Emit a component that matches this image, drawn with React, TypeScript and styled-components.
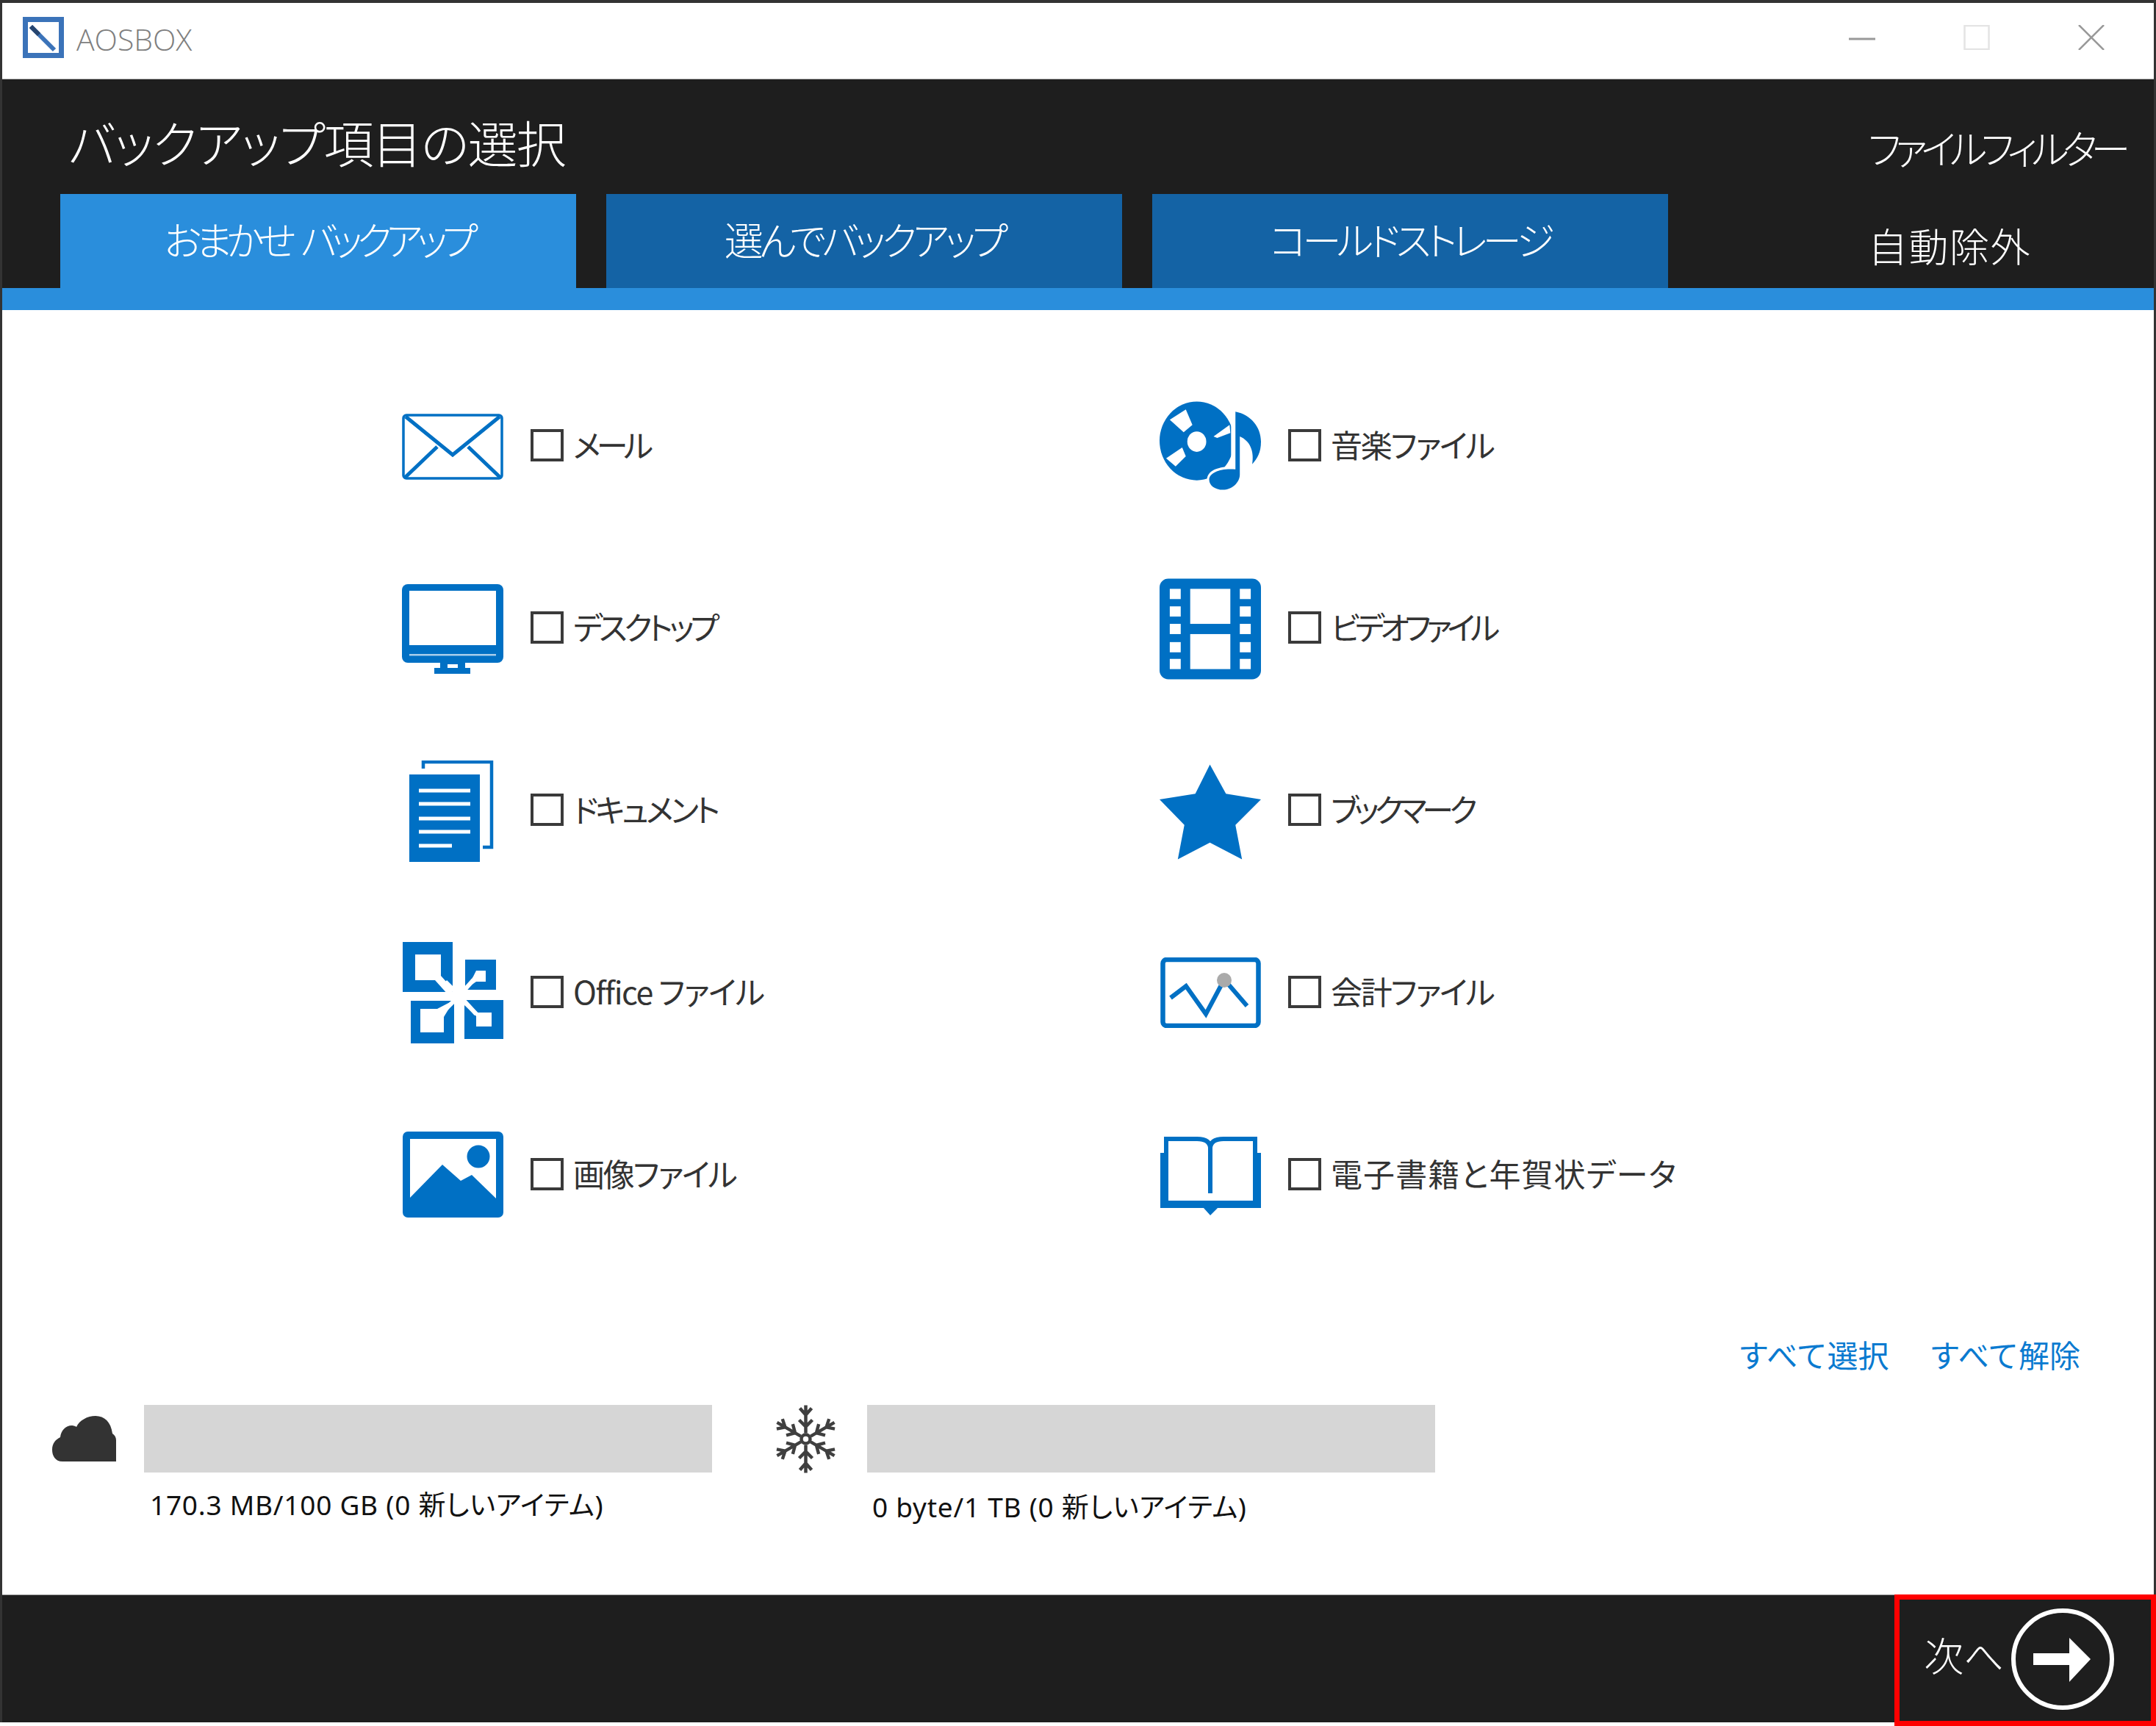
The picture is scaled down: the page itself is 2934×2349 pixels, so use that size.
import React from 'react';
import styled, { createGlobalStyle } from 'styled-components';

const JP = '"Noto Sans CJK JP", "Noto Sans", sans-serif';
const BLUE = '#0070c4';

const GlobalStyle = createGlobalStyle`
  html, body { margin: 0; padding: 0; background: #fff; }
  body { font-family: ${JP}; }
`;

const Screen = styled.div`
  position: relative;
  width: 2934px;
  height: 2349px;
  overflow: hidden;
  background: #fff;
`;

const Window = styled.div`
  display: flex;
  flex-direction: column;
  box-sizing: border-box;
  height: 2344px;
  border-top: 4px solid #333;
  border-left: 3px solid #333;
  border-right: 3px solid #333;
`;

const TitleBar = styled.div`
  display: flex;
  align-items: flex-start;
  box-sizing: border-box;
  height: 104px;
  padding: 19px 67px 0 28px;
  background: #fff;
  border-bottom: 1px solid #bbb;
`;

const AppName = styled.span`
  margin-left: 17px;
  font-family: "Open Sans", sans-serif;
  font-weight: 300;
  font-size: 41px;
  line-height: 60px;
  letter-spacing: 0;
  color: #7f7f7f;
`;

const WindowButtons = styled.div`
  display: flex;
  gap: 120px;
  margin-left: auto;
  padding-top: 11px;
`;

const Header = styled.header`
  display: flex;
  height: 284px;
  background: #1e1e1e;
`;

const HeaderMain = styled.div`
  display: flex;
  flex-direction: column;
`;

const Title = styled.h1`
  margin: 0;
  box-sizing: border-box;
  height: 156px;
  padding: 16px 0 0 90px;
  font-size: 68px;
  line-height: 138px;
  font-weight: 300;
  font-feature-settings: "palt";
  letter-spacing: -1.8px;
  color: #fff;
  white-space: nowrap;
`;

const Tabs = styled.div`
  display: flex;
  gap: 41px;
  padding-left: 79px;
`;

const Tab = styled.div<{ $active?: boolean; $tracking: number }>`
  box-sizing: border-box;
  width: 702px;
  height: 128px;
  padding-bottom: 6px;
  background: ${(p) => (p.$active ? '#2a8edc' : '#1463a5')};
  color: #fff;
  text-align: center;
  font-size: 53px;
  line-height: 122px;
  font-weight: 300;
  font-feature-settings: "palt";
  letter-spacing: ${(p) => p.$tracking}px;
  word-spacing: 10px;
  white-space: nowrap;
`;

const HeaderLinks = styled.div`
  display: flex;
  flex-direction: column;
  gap: 73px;
  margin-left: auto;
  width: 389px;
  box-sizing: border-box;
  padding-top: 63px;
`;

const HeaderLink = styled.span<{ $tracking: number }>`
  font-size: 54px;
  line-height: 60px;
  font-weight: 300;
  font-feature-settings: "palt";
  letter-spacing: ${(p) => p.$tracking}px;
  color: #fff;
  white-space: nowrap;
`;

const Strip = styled.div`
  height: 30px;
  background: #2a8edc;
`;

const Content = styled.main`
  flex: 1;
  display: flex;
  flex-direction: column;
  background: #fff;
`;

const ItemGrid = styled.div`
  display: grid;
  grid-template-columns: 1031px 1fr;
  grid-auto-rows: 248px;
  padding: 60px 0 0 544px;
`;

const Item = styled.label`
  display: flex;
  align-items: center;
`;

const IconCell = styled.div<{ $nudge: number }>`
  display: flex;
  justify-content: center;
  align-items: center;
  width: 138px;
  margin-right: 37px;
  padding-top: ${(p) => p.$nudge}px;
`;

const Check = styled.input.attrs({ type: 'checkbox' })`
  appearance: none;
  box-sizing: border-box;
  flex: none;
  width: 45px;
  height: 44px;
  margin: 0 13px 0 0;
  border: 4px solid #3a3a3a;
  background: #fff;
`;

const ItemLabel = styled.span<{ $tracking: number }>`
  padding-bottom: 4px;
  font-size: 43px;
  line-height: 56px;
  font-feature-settings: "palt";
  letter-spacing: ${(p) => p.$tracking}px;
  color: #333;
  white-space: nowrap;
`;

const SelectLinks = styled.div`
  display: flex;
  justify-content: flex-end;
  gap: 55px;
  margin-top: 96px;
  padding-right: 100px;
`;

const SelectLink = styled.a`
  font-size: 42px;
  line-height: 50px;
  color: #0a7ad0;
  white-space: nowrap;
`;

const Storage = styled.div`
  display: flex;
  gap: 86px;
  margin-top: 44px;
  padding-left: 68px;
`;

const StorageItem = styled.div`
  display: grid;
  grid-template-columns: 125px 773px;
`;

const StorageIcon = styled.div`
  display: flex;
  align-items: center;
  height: 92px;
`;

const Bar = styled.div`
  height: 92px;
  background: #d6d6d6;
`;

const Caption = styled.div<{ $top: number; $indent: number }>`
  grid-column: 2;
  margin-top: ${(p) => p.$top}px;
  padding-left: ${(p) => p.$indent}px;
  font-family: "Noto Sans", "Noto Sans CJK JP", sans-serif;
  font-size: 37px;
  line-height: 40px;
  font-feature-settings: "palt";
  letter-spacing: 0.75px;
  color: #111;
  white-space: nowrap;
`;

const Footer = styled.footer`
  display: flex;
  justify-content: flex-end;
  height: 174px;
  background: #1e1e1e;
  border-top: 1px solid #999;
  box-sizing: border-box;
`;

const NextButton = styled.div`
  display: flex;
  align-items: center;
  gap: 10px;
  padding: 0 54px 0 0;
`;

const NextLabel = styled.span`
  padding-bottom: 12px;
  font-size: 54px;
  line-height: 60px;
  font-weight: 300;
  font-feature-settings: "palt";
  color: #fff;
`;

const RedFrame = styled.div`
  position: absolute;
  right: 0;
  bottom: 0;
  box-sizing: border-box;
  width: 356px;
  height: 179px;
  border: 7px solid #f00;
  pointer-events: none;
`;

const Logo = () => (
  <svg width="56" height="56" viewBox="0 0 56 56">
    <rect x="3.5" y="3.5" width="49" height="49" fill="#fff" stroke="#3b73b9" strokeWidth="7" />
    <path d="M11 13 L43 45" stroke="#3b73b9" strokeWidth="6" />
    <path d="M11 13 L22 24" stroke="#27456f" strokeWidth="6" />
  </svg>
);

const MinIcon = () => (
  <svg width="36" height="34" viewBox="0 0 36 34">
    <path d="M0 19 H36" stroke="#999" strokeWidth="3" />
  </svg>
);

const MaxIcon = () => (
  <svg width="36" height="34" viewBox="0 0 36 34">
    <rect x="1.5" y="1" width="33" height="32" fill="none" stroke="#e4e4e4" strokeWidth="2.5" />
  </svg>
);

const CloseIcon = () => (
  <svg width="36" height="34" viewBox="0 0 36 34">
    <path d="M1 0 L35 34 M35 0 L1 34" stroke="#999" strokeWidth="2.5" />
  </svg>
);

const MailIcon = () => (
  <svg width="138" height="90" viewBox="0 0 138 90" fill="none" stroke={BLUE}>
    <rect x="2" y="2" width="134" height="86" rx="4" strokeWidth="3.5" />
    <path d="M5 4 L69 56 L133 4 M4 87 L48 45 M134 87 L90 45" strokeWidth="5" />
  </svg>
);

const DesktopIcon = () => (
  <svg width="138" height="122" viewBox="0 0 138 122">
    <rect x="0" y="0" width="138" height="107" rx="8" fill={BLUE} />
    <rect x="10" y="9" width="118" height="74" fill="#fff" />
    <rect x="10" y="95" width="118" height="2.5" fill="#a8cdea" />
    <path d="M52 106 H86 V114 H93 V122 H44 V114 H52 Z" fill={BLUE} />
    <rect x="62" y="109" width="14" height="5" fill="#fff" />
  </svg>
);

const DocIcon = () => (
  <svg width="118" height="138" viewBox="0 0 118 138">
    <path d="M19 11 V2 H112 V118 H100" fill="none" stroke={BLUE} strokeWidth="4.5" />
    <rect x="0" y="19" width="96" height="119" fill={BLUE} />
    {[41, 59, 79, 97].map((y) => (
      <rect key={y} x="13" y={y - 2.5} width="70" height="5" fill="#fff" />
    ))}
    <rect x="13" y="113.5" width="45" height="5" fill="#fff" />
  </svg>
);

const OfficeIcon = () => (
  <svg width="137" height="138" viewBox="0 0 137 138">
    <rect x="0" y="0" width="68" height="68" fill={BLUE} />
    <rect x="85" y="24" width="42" height="41" fill={BLUE} />
    <rect x="11" y="80" width="59" height="58" fill={BLUE} />
    <rect x="84" y="79" width="53" height="53" fill={BLUE} />
    <path d="M17 17 H52 V46 L70 66 L62 72 L44 52 H17 Z" fill="#fff" />
    <path d="M100 39 H113 V54 H100 L84 65 L96 47 Z" fill="#fff" />
    <path d="M24 91 H47 L70 79 L56 102 V123 H24 Z" fill="#fff" />
    <path d="M84 79 L102 96 H121 V115 H100 V101 L84 86 Z" fill="#fff" />
    <path d="M77 73 L58 54 M77 73 L96 52 M77 73 L55 95 M77 73 L100 98" stroke="#fff" strokeWidth="6" />
  </svg>
);

const ImageIcon = () => (
  <svg width="137" height="117" viewBox="0 0 137 117">
    <rect x="0" y="0" width="137" height="117" rx="7" fill={BLUE} />
    <path d="M10 10 H127 V91 L94 59 L79 67 L54 45 L10 90 Z" fill="#fff" />
    <circle cx="103" cy="34" r="15.5" fill={BLUE} />
  </svg>
);

const DiscIcon = () => (
  <svg width="139" height="121" viewBox="0 0 139 121">
    <ellipse cx="51" cy="54" rx="51" ry="54" fill={BLUE} />
    <ellipse cx="51" cy="55" rx="13" ry="14" fill="#fff" />
    <path d="M14 25 L36 11 L45 32 L33 42 Z M9 78 L31 63 L36 75 L22 89 Z M74 48 L96 32 L97 43 L79 50 Z" fill="#fff" />
    <rect x="98" y="5" width="8" height="90" fill="#fff" />
    <path d="M65 108 C 65 93 85 88 104 90 V14 C 125 18 139 35 139 55 C 139 70 134 78 127 86 C 130 68 124 54 110 48 V100 C 110 112 98 121 86 121 C 74 121 65 116 65 108 Z" fill="#fff" />
    <path d="M68 107 C 68 97 85 91 104 93 V14 C 125 18 139 35 139 55 C 139 70 134 78 127 86 C 130 68 124 54 110 48 V100 C 110 112 98 121 87 121 C 76 121 68 115 68 107 Z" fill={BLUE} />
  </svg>
);

const VideoIcon = () => {
  const tops = [14, 38, 62, 87, 110];
  return (
    <svg width="139" height="138" viewBox="0 0 139 138">
      <rect x="0" y="0" width="139" height="138" rx="12" fill={BLUE} />
      {tops.map((y) => (
        <g key={y} fill="#fff">
          <rect x="14" y={y} width="15" height="14" />
          <rect x="110" y={y} width="15" height="14" />
        </g>
      ))}
      <rect x="42" y="14" width="55" height="48" fill="#fff" />
      <rect x="42" y="76" width="55" height="48" fill="#fff" />
    </svg>
  );
};

const StarIcon = () => (
  <svg width="139" height="130" viewBox="0 0 139 130">
    <polygon points="69,0 91,40 139,48 104,83 113,130 69,107 25,130 34,83 0,48 49,40" fill={BLUE} />
  </svg>
);

const ChartIcon = () => (
  <svg width="137" height="96" viewBox="0 0 137 96" fill="none">
    <rect x="3.5" y="3" width="130" height="90" rx="5" stroke={BLUE} strokeWidth="6.5" />
    <path d="M14 55 L35 39 L62 77 L87 30 L118 66" stroke={BLUE} strokeWidth="6" />
    <circle cx="87" cy="31" r="10" fill="#aaa" />
  </svg>
);

const BookIcon = () => (
  <svg width="137" height="107" viewBox="0 0 137 107">
    <path d="M0 22 H6 V87 H131 V22 H137 V97 H78 L68 107 L59 97 H0 Z" fill={BLUE} />
    <path d="M8 90 V3 H50 Q68 3 68 16 Q68 3 86 3 H129 V90 M68 16 V77" fill="none" stroke={BLUE} strokeWidth="6" />
  </svg>
);

const CloudIcon = () => (
  <svg width="87" height="62" viewBox="0 0 87 62">
    <path d="M14 62 C 4 62 0 54 0 46 C 0 37 5 32 11 29 C 12 20 18 13 27 13 C 29 13 32 14 33 15 C 37 6 48 0 59 0 C 71 0 80 8 82 24 C 85 26 87 29 87 33 V62 Z" fill="#333" />
  </svg>
);

const SnowflakeIcon = () => (
  <svg width="83" height="93" viewBox="-41.5 -46.5 83 93" fill="none" stroke="#3f3f3f" strokeWidth="4.5">
    {[0, 60, 120, 180, 240, 300].map((a) => (
      <g key={a} transform={`rotate(${a}) scale(${a % 180 === 0 ? 1 : 0.98})`}>
        <path d="M0 -8 V-46 M-8 -42 L0 -33 L8 -42 M-9 -26 L0 -17 L9 -26" />
      </g>
    ))}
    <circle r="6" />
  </svg>
);

const ArrowCircle = () => (
  <svg width="140" height="138" viewBox="0 0 140 138">
    <ellipse cx="70" cy="69" rx="67" ry="66" fill="none" stroke="#fff" strokeWidth="6" />
    <path d="M30 61 H79 V40 L108 69 L79 100 V77 H30 Z" fill="#fff" />
  </svg>
);

const items = [
  { label: 'メール', tracking: -5.5, nudge: 4, icon: <MailIcon /> },
  { label: '音楽ファイル', tracking: -2.2, nudge: 0, icon: <DiscIcon /> },
  { label: 'デスクトップ', tracking: -5, nudge: 4, icon: <DesktopIcon /> },
  { label: 'ビデオファイル', tracking: -6.3, nudge: 4, icon: <VideoIcon /> },
  { label: 'ドキュメント', tracking: -3.9, nudge: 4, icon: <DocIcon /> },
  { label: 'ブックマーク', tracking: -6, nudge: 6, icon: <StarIcon /> },
  { label: 'Office ファイル', tracking: -1.4, nudge: 2, icon: <OfficeIcon /> },
  { label: '会計ファイル', tracking: -2.2, nudge: 2, icon: <ChartIcon /> },
  { label: '画像ファイル', tracking: -2.2, nudge: 0, icon: <ImageIcon /> },
  { label: '電子書籍と年賀状データ', tracking: 1.1, nudge: 4, icon: <BookIcon /> },
];

function App(): React.ReactElement {
  return (
    <Screen>
      <GlobalStyle />
      <Window>
        <TitleBar>
          <Logo />
          <AppName>AOSBOX</AppName>
          <WindowButtons>
            <MinIcon />
            <MaxIcon />
            <CloseIcon />
          </WindowButtons>
        </TitleBar>
        <Header>
          <HeaderMain>
            <Title>バックアップ項目の選択</Title>
            <Tabs>
              <Tab $active $tracking={-7.6}>おまかせ バックアップ</Tab>
              <Tab $tracking={-5.3}>選んでバックアップ</Tab>
              <Tab $tracking={-5.6}>コールドストレージ</Tab>
            </Tabs>
          </HeaderMain>
          <HeaderLinks>
            <HeaderLink $tracking={-8.3}>ファイルフィルター</HeaderLink>
            <HeaderLink $tracking={1.5}>自動除外</HeaderLink>
          </HeaderLinks>
        </Header>
        <Strip />
        <Content>
          <ItemGrid>
            {items.map((it) => (
              <Item key={it.label}>
                <IconCell $nudge={it.nudge}>{it.icon}</IconCell>
                <Check />
                <ItemLabel $tracking={it.tracking}>{it.label}</ItemLabel>
              </Item>
            ))}
          </ItemGrid>
          <SelectLinks>
            <SelectLink>すべて選択</SelectLink>
            <SelectLink>すべて解除</SelectLink>
          </SelectLinks>
          <Storage>
            <StorageItem>
              <StorageIcon><CloudIcon /></StorageIcon>
              <Bar />
              <Caption $top={21} $indent={8}>170.3 MB/100 GB (0 新しいアイテム)</Caption>
            </StorageItem>
            <StorageItem>
              <StorageIcon><SnowflakeIcon /></StorageIcon>
              <Bar />
              <Caption $top={27} $indent={7}>0 byte/1 TB (0 新しいアイテム)</Caption>
            </StorageItem>
          </Storage>
        </Content>
        <Footer>
          <NextButton>
            <NextLabel>次へ</NextLabel>
            <ArrowCircle />
          </NextButton>
        </Footer>
      </Window>
      <RedFrame />
    </Screen>
  );
}

export default App;
